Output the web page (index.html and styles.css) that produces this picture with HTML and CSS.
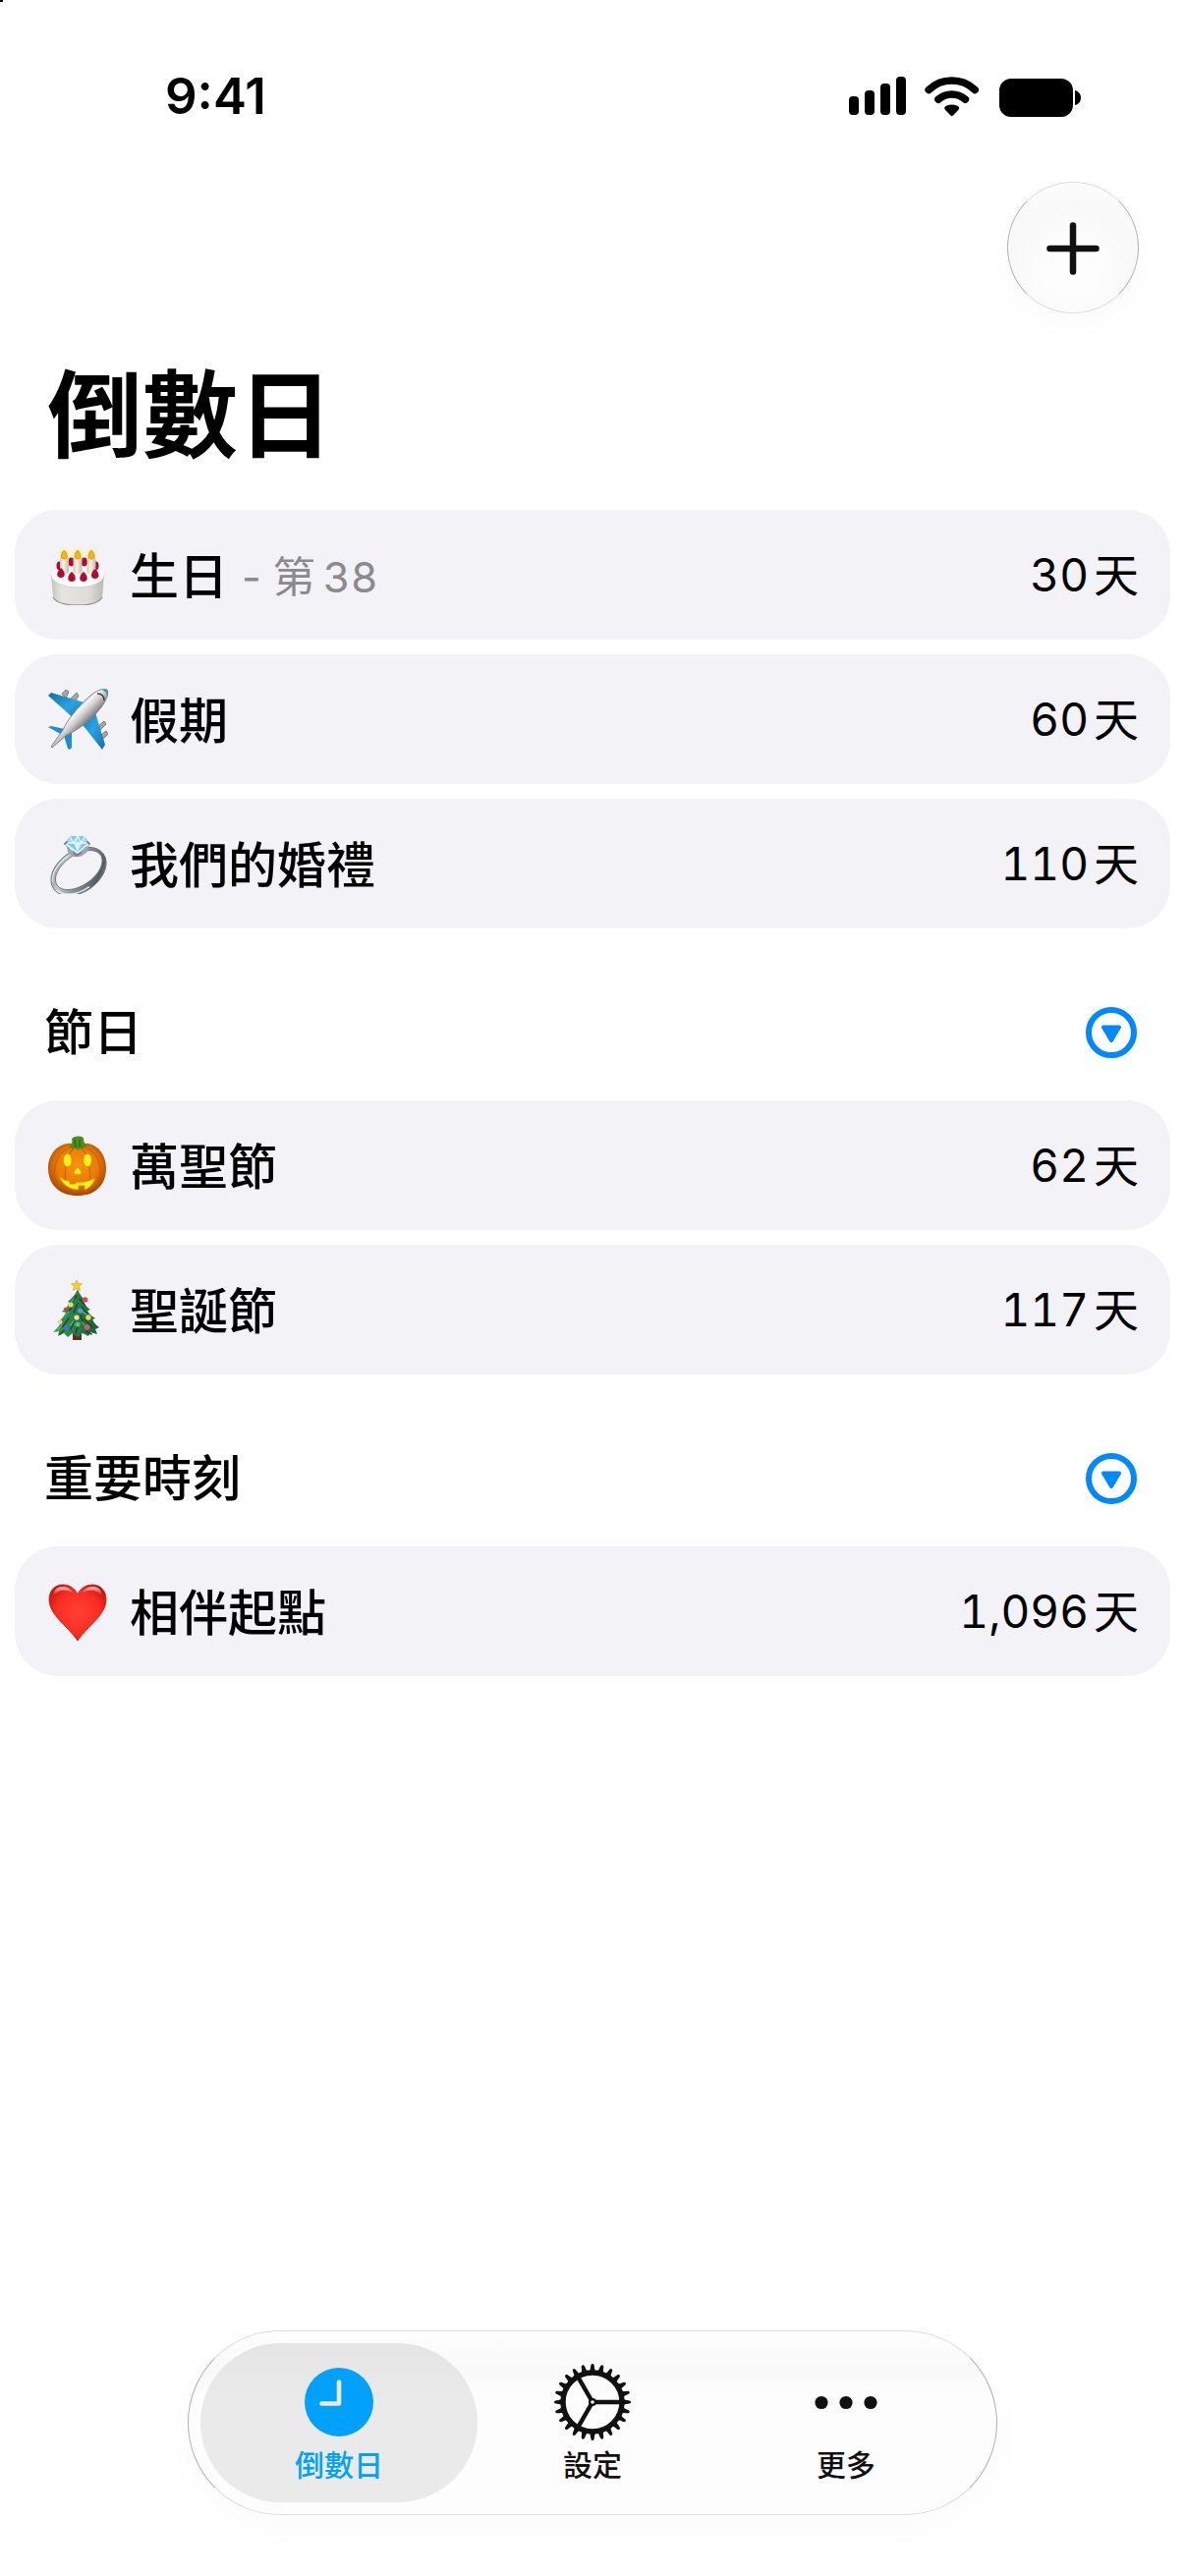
FILE: index.html
```html
<!DOCTYPE html>
<html lang="zh-Hant">
<head>
<meta charset="utf-8">
<meta name="viewport" content="width=device-width, initial-scale=1">
<title>倒數日</title>
<link rel="stylesheet" href="styles.css">
</head>
<body>
<div class="app">
  <div class="status">
    <span class="clock">9:41</span>
    <svg class="status-icons" width="236" height="41" viewBox="0 0 236 41" aria-hidden="true">
      <rect x="0" y="20" width="10" height="19" rx="4"/>
      <rect x="16" y="14" width="10" height="25" rx="4"/>
      <rect x="32" y="7" width="10" height="32" rx="4"/>
      <rect x="48" y="0" width="10" height="39" rx="4"/>
      <g fill="none" stroke="#000" stroke-width="7.6" stroke-linecap="round">
        <path d="M81.2 13.4a34 34 0 0 1 47 0"/>
        <path d="M91 23.2a20.5 20.5 0 0 1 27.400 0"/>
      </g>
      <path d="M98.600 34.500c-2-1.800-2-3.500.400-4.700a13 13 0 0 1 11.400 0c2.400 1.200 2.400 2.900.4 4.700l-4.300 4.600c-1.300 1.400-2.300 1.400-3.600 0z"/>
      <rect x="153" y="2" width="75" height="39" rx="12"/>
      <path d="M230 14c4 1 6 4 6 7.500s-2 6.500-6 7.500z"/>
    </svg>
  </div>

  <header class="top">
    <button class="add" type="button" aria-label="新增">
      <svg width="54" height="54" viewBox="0 0 54 54"><path d="M27 3.500v47M3.500 27h47" stroke="#111" stroke-width="6.500" stroke-linecap="round"/></svg>
    </button>
  </header>
  <h1 class="title">倒數日</h1>

  <main>
    <ul class="list">
      <li class="card">
        <svg class="emoji" viewBox="0 0 62 62" role="img" aria-label="蛋糕">
          <defs>
            <linearGradient id="cakeSide" x1="0" x2="1"><stop offset="0" stop-color="#c4c2be"/><stop offset=".2" stop-color="#e6e4e1"/><stop offset=".7" stop-color="#dfddda"/><stop offset="1" stop-color="#bcb9b4"/></linearGradient>
            <linearGradient id="candle" x1="0" x2="1"><stop offset="0" stop-color="#cfc8b0"/><stop offset=".4" stop-color="#f8f4e3"/><stop offset="1" stop-color="#c4bca2"/></linearGradient>
            <radialGradient id="glow"><stop offset="0" stop-color="#ffe95c"/><stop offset="1" stop-color="#fff3a0" stop-opacity="0"/></radialGradient>
          </defs>
          <path d="M4 31l2 23c1 5 12 9 25 9s24-4 25-9l2-23z" fill="url(#cakeSide)"/>
          <path d="M6 54c3 5 12 8 25 8s22-3 25-8" fill="none" stroke="#9b978f" stroke-width="1.400"/>
          <ellipse cx="31" cy="31" rx="27" ry="13" fill="#fafafa"/>
          <path d="M4 31c0 7 12 13 27 13s27-6 27-13" fill="none" stroke="#d2d0cc" stroke-width="1"/>
          <g fill="#b00a38"><ellipse cx="12.500" cy="22" rx="3" ry="4.400"/><ellipse cx="49.500" cy="22" rx="3" ry="4.400"/><ellipse cx="24.700" cy="18" rx="3.400" ry="4.400"/><ellipse cx="37.700" cy="18" rx="3.400" ry="4.400"/></g>
          <g fill="url(#glow)"><circle cx="17.300" cy="10" r="8"/><circle cx="31" cy="10" r="8"/><circle cx="45" cy="10" r="8"/></g>
          <g fill="url(#candle)"><rect x="13" y="13" width="9" height="17" rx="2.500"/><rect x="26.500" y="13" width="9" height="17" rx="2.500"/><rect x="40.500" y="13" width="9" height="17" rx="2.500"/></g>
          <g fill="#f1b90f" stroke="#c08e10" stroke-width=".7"><path d="M17.300 6c4 4 4 9 0 9s-4-5 0-9zM31 6c4 4 4 9 0 9s-4-5 0-9zM45 6c4 4 4 9 0 9s-4-5 0-9z"/></g>
          <g fill="#b00a38"><path d="M14 24c5 4 5 10 0 10s-5-6 0-10zM25 28c5 4 5 10 0 10s-5-6 0-10zM37 28c5 4 5 10 0 10s-5-6 0-10zM48.700 25c5 4 5 10 0 10s-5-6 0-10z"/></g>
        </svg>
        <span class="name">生日</span>
        <span class="nth"><span>-</span><span>第</span><span class="num">38</span></span>
        <span class="days"><span class="num">30</span><span class="unit">天</span></span>
      </li>
      <li class="card">
        <svg class="emoji" viewBox="0 0 62 62" role="img" aria-label="飛機">
          <defs>
            <linearGradient id="hull" gradientUnits="userSpaceOnUse" x1="23" y1="20" x2="39" y2="36"><stop offset="0" stop-color="#8e8c8a"/><stop offset=".35" stop-color="#f4f4f4"/><stop offset=".6" stop-color="#d2d1d0"/><stop offset="1" stop-color="#7d7b79"/></linearGradient>
            <linearGradient id="wing" x1="0" y1="0" x2="1" y2="1"><stop offset="0" stop-color="#0f6fa3"/><stop offset=".5" stop-color="#2ba3e0"/><stop offset="1" stop-color="#0f6fa3"/></linearGradient>
          </defs>
          <g fill="#a8a6a3" stroke="#6d6b68" stroke-width=".8"><path d="M15 5l4-4 3 2-3 7zM24 10l6-6 2 3-4 7zM52 38l6-5 2 3-6 6zM55 47l5-4 2 3-5 5z"/></g>
          <path d="M1 7l3-3 37 11-12 17z" fill="url(#wing)"/>
          <path d="M48 21l11 36-3 5-23-29z" fill="url(#wing)"/>
          <path d="M1 39l3-1 14 3-1 7z" fill="#1f8fc9"/>
          <path d="M17 48l8-5v17l-2 2-2-1z" fill="#1f8fc9"/>
          <path d="M4 59l12-17c4-9 15-24 28-35 6-5 13-8 17-6 2 5-1 11-6 18C45 32 30 43 20 47L5 60z" fill="url(#hull)" stroke="#7d7b78" stroke-width=".9"/>
          <path d="M56 1q8-2 5 7l-1-4z" fill="#2b9bd3"/>
          <path d="M51 5q7 0 7 7" fill="none" stroke="#444" stroke-width="1.500"/>
        </svg>
        <span class="name">假期</span>
        <span class="days"><span class="num">60</span><span class="unit">天</span></span>
      </li>
      <li class="card">
        <svg class="emoji" viewBox="0 0 62 62" role="img" aria-label="戒指">
          <defs>
            <linearGradient id="band" x1="0" y1="0" x2="1" y2="1"><stop offset="0" stop-color="#767c84"/><stop offset=".3" stop-color="#c3c8ce"/><stop offset=".55" stop-color="#858c95"/><stop offset=".8" stop-color="#555c66"/><stop offset="1" stop-color="#a4aab2"/></linearGradient>
          </defs>
          <g transform="rotate(-35 32 39)">
            <path fill-rule="evenodd" d="M1 39a31 21 0 1 1 62 0a31 21 0 1 1-62 0zM6 38a27 15.500 0 1 0 54 0a27 15.500 0 1 0-54 0z" fill="url(#band)" stroke="#666d76" stroke-width=".8"/>
            <path d="M3 42c3 10 14 16 29 16" fill="none" stroke="#e8eaee" stroke-width="1.600"/>
            <path d="M4 33c4-8 15-13 28-13" fill="none" stroke="#e8eaee" stroke-width="1.300"/>
          </g>
          <path d="M19 11l9 10h5l10-10-3 9-6 4h-8l-5-5z" fill="#a1a7ae"/>
          <path d="M18 10l5-7h15l5 7-11 10h-3z" fill="#9bd8fb"/>
          <path d="M18 10h25l-12 10zM23 3l4 7 4-7 4 7 3-7" fill="#62b6ef" fill-opacity=".5" stroke="#e9f8ff" stroke-width="1.400"/>
          <path d="M27 10l4 9 4-9z" fill="#d9f3ff"/>
          <path d="M18 11l2-2M43 11l-2-2M27 20l3 3 4-3" stroke="#7a828b" stroke-width="2" stroke-linecap="round" fill="none"/>
        </svg>
        <span class="name">我們的婚禮</span>
        <span class="days"><span class="num">110</span><span class="unit">天</span></span>
      </li>
    </ul>

    <section>
      <div class="section-head">
        <h2>節日</h2>
        <button class="toggle" type="button" aria-label="收合節日">
          <svg width="52" height="52" viewBox="0 0 52 52"><circle cx="26" cy="26" r="23" fill="none" stroke="#08f" stroke-width="6"/><path d="M18 20.500h16l-8 13.500z" fill="#08f" stroke="#08f" stroke-width="4" stroke-linejoin="round"/></svg>
        </button>
      </div>
      <ul class="list">
        <li class="card">
          <svg class="emoji" viewBox="0 0 62 62" role="img" aria-label="南瓜燈">
            <defs>
              <radialGradient id="pumpkin" cx=".5" cy=".42" r=".6"><stop offset="0" stop-color="#f8930e"/><stop offset=".6" stop-color="#ea7a08"/><stop offset="1" stop-color="#a03f06"/></radialGradient>
            </defs>
            <path d="M31 10c16-5 29 7 29 24 0 18-12 28-29 28S1 52 1 34C1 17 15 5 31 10z" fill="url(#pumpkin)"/>
            <g fill="none" stroke="#bf5a05" stroke-width="1.300" opacity=".7"><path d="M28 13C17 22 15 48 24 61M34 13c11 9 13 35 4 48M24 13C7 18 3 42 13 55M38 13c17 5 21 29 11 42"/></g>
            <path d="M21 12c4-1 5-4 4-8 4-3 8-3 12-1 0 4 1 7 5 9-3 0-5 0-6 3-2-2-3-1-5 1-2-3-3-3-5-1-1-2-3-3-5-3z" fill="#4d8c1d"/>
            <path d="M28 5l1 8M33 5v8" stroke="#2d6511" stroke-width="1.300"/>
            <g fill="#f8ef17" stroke="#d88a08" stroke-width=".8"><ellipse cx="20.700" cy="26" rx="4.400" ry="6.800"/><ellipse cx="41" cy="26" rx="4.400" ry="6.800"/><path d="M31 33c2 2 4 4 4 6-2 2-6 2-8 0 0-2 2-4 4-6z"/><path d="M12 42c4 4 8 5 11 5v3h6v-2c8 1 14-1 20-4-2 7-7 11-11 12v-4h-6v4c-10 0-17-6-20-14z"/></g>
          </svg>
          <span class="name">萬聖節</span>
          <span class="days"><span class="num">62</span><span class="unit">天</span></span>
        </li>
        <li class="card">
          <svg class="emoji" viewBox="0 0 62 62" role="img" aria-label="聖誕樹">
            <defs><linearGradient id="pine" x1="0" x2="1"><stop offset="0" stop-color="#3f9a57"/><stop offset="1" stop-color="#1d5c37"/></linearGradient></defs>
            <rect x="26" y="53" width="9" height="10" rx="1" fill="#5b3219"/>
            <path d="M31 10c2 6 5 9 9 12l-3 1c2 4 4 6 7 8l-3 1c2 4 5 6 8 8l-3 1c2 4 4 6 7 8l-4 2 2 5-7-2-2 4-6-3-5 4-5-4-5 4-4-4-6 3 1-5-6 1c4-4 6-6 8-10l-3-1c4-2 6-5 8-9l-4-1c4-3 6-6 8-9l-2-1c4-4 8-7 10-13z" fill="url(#pine)"/>
            <path d="M30 17l-6 8M33 20l5 6M25 29l-6 7M31 25l-4 9M35 29l6 7M22 40l-7 9M29 38l-5 13M34 37l4 11M38 41l8 8M31 48l-2 7M17 52l-4 4M40 53l5 3" stroke="#174d2c" stroke-width="1.500" stroke-linecap="round"/>
            <path d="M27 20l-3 4M22 33l-4 4M36 33l4 3M27 42l-3 5M36 44l3 5M15 47l-4 4" stroke="#67b878" stroke-width="1.200" stroke-linecap="round"/>
            <path d="M30 1l1.500 3.500 4 .3-3 2.700 1 4-3.500-2.200-3.500 2.200 1-4-3-2.700 4-.3z" fill="#f8cf2c" stroke="#dba31a" stroke-width=".7"/>
            <g><circle cx="38.700" cy="21" r="2.700" fill="#e2425a"/><circle cx="24" cy="26" r="2.600" fill="#f0d956"/><circle cx="18.700" cy="30.700" r="2" fill="#d73a55"/><circle cx="33.700" cy="32" r="2.600" fill="#5a9be0"/><circle cx="30" cy="39" r="2.600" fill="#f3dfa0"/><circle cx="42" cy="39" r="2.700" fill="#efd94e"/><circle cx="13" cy="43.700" r="2.400" fill="#f0cf9d"/><circle cx="19.700" cy="49.700" r="2.500" fill="#3c78c8"/><circle cx="31" cy="46" r="2.600" fill="#57bf78"/><circle cx="40.700" cy="49" r="2.800" fill="#e25674"/></g>
          </svg>
          <span class="name">聖誕節</span>
          <span class="days"><span class="num">117</span><span class="unit">天</span></span>
        </li>
      </ul>
    </section>

    <section>
      <div class="section-head">
        <h2>重要時刻</h2>
        <button class="toggle" type="button" aria-label="收合重要時刻">
          <svg width="52" height="52" viewBox="0 0 52 52"><circle cx="26" cy="26" r="23" fill="none" stroke="#08f" stroke-width="6"/><path d="M18 20.500h16l-8 13.500z" fill="#08f" stroke="#08f" stroke-width="4" stroke-linejoin="round"/></svg>
        </button>
      </div>
      <ul class="list">
        <li class="card">
          <svg class="emoji" viewBox="0 0 62 62" role="img" aria-label="愛心">
            <defs>
              <radialGradient id="heart" cx=".5" cy=".5" r=".6"><stop offset="0" stop-color="#ff4033"/><stop offset=".65" stop-color="#fb2c22"/><stop offset="1" stop-color="#c4130f"/></radialGradient>
              <linearGradient id="shine" x1="0" y1="0" x2="0" y2="1"><stop offset="0" stop-color="#fff" stop-opacity=".7"/><stop offset="1" stop-color="#fff" stop-opacity="0"/></linearGradient>
            </defs>
            <path d="M31 14C28 7 22 4 16 4 8 4 2 10 2 19c0 16 19 27 29 42 10-15 29-26 29-42 0-9-6-15-14-15-6 0-12 3-15 10z" fill="url(#heart)" stroke="#c41a14" stroke-width=".8"/>
            <path d="M6 15C7 8 11 6 16 6s9 3 11 7C20 8 12 9 6 15zM56 15C55 8 51 6 46 6s-9 3-11 7c7-5 15-4 21 2z" fill="url(#shine)"/>
          </svg>
          <span class="name">相伴起點</span>
          <span class="days"><span class="num">1,096</span><span class="unit">天</span></span>
        </li>
      </ul>
    </section>
  </main>

  <nav class="tabs">
    <button class="tab active" type="button" aria-current="page">
      <svg width="78" height="78" viewBox="0 0 78 78" aria-hidden="true"><circle cx="39" cy="39" r="35" fill="currentColor"/><path d="M39 18.500v22H21.500" fill="none" stroke="#e9e9e9" stroke-width="4.600" stroke-linecap="round" stroke-linejoin="round"/></svg>
      <span>倒數日</span>
    </button>
    <button class="tab" type="button">
      <svg width="78" height="78" viewBox="0 0 78 78" aria-hidden="true">
        <defs>
          <path id="tooth" d="M36 8c1-3 1-5 1.400-6.500.4-2 2.800-2 3.200 0C41 3 41 5 42 8z"/>
          <g id="teeth"><use href="#tooth"/><use href="#tooth" transform="rotate(15 39 39)"/><use href="#tooth" transform="rotate(30 39 39)"/><use href="#tooth" transform="rotate(45 39 39)"/><use href="#tooth" transform="rotate(60 39 39)"/><use href="#tooth" transform="rotate(75 39 39)"/></g>
        </defs>
        <g fill="currentColor"><use href="#teeth"/><use href="#teeth" transform="rotate(90 39 39)"/><use href="#teeth" transform="rotate(180 39 39)"/><use href="#teeth" transform="rotate(270 39 39)"/></g>
        <circle cx="39" cy="39" r="30" fill="none" stroke="currentColor" stroke-width="5.400"/>
        <path d="M39 39h29M39 39L24.500 13.900M39 39L24.500 64.100" stroke="currentColor" stroke-width="4.400"/>
        <circle cx="39" cy="39" r="4" fill="currentColor"/><circle cx="39" cy="39" r="1.800" fill="#fcfcfc"/>
      </svg>
      <span>設定</span>
    </button>
    <button class="tab" type="button">
      <svg width="78" height="78" viewBox="0 0 78 78" fill="currentColor" aria-hidden="true"><circle cx="14" cy="39.500" r="6.600"/><circle cx="39" cy="39.500" r="6.600"/><circle cx="64" cy="39.500" r="6.600"/></svg>
      <span>更多</span>
    </button>
  </nav>
</div>
</body>
</html>
```

FILE: styles.css
```css
* {
  box-sizing: border-box;
}

body {
  margin: 0;
  background: #fff;
  color: #000;
  font-family: Inter, "Noto Sans CJK TC", sans-serif;
  font-size: 50px;
}

button {
  padding: 0;
  border: 0;
  background: none;
  color: inherit;
  font: inherit;
}

svg {
  display: block;
  flex: none;
}

h1,
h2,
ul {
  margin: 0;
  padding: 0;
}

.app {
  display: flex;
  flex-direction: column;
  min-height: 100vh;
  background: linear-gradient(#000, #000) 0 0 / 3px 2px no-repeat;
}

/* Status bar */
.status {
  display: flex;
  align-items: center;
  justify-content: space-between;
  padding: 70px 106px 0 168px;
}

.clock {
  font-size: 51px;
  font-weight: 600;
  line-height: 56px;
}

/* Header */
.top {
  display: flex;
  justify-content: flex-end;
  padding: 59px 47px 0;
}

.add {
  display: grid;
  place-items: center;
  width: 134px;
  height: 134px;
  padding-top: 2px;
  border: 1px solid;
  border-color: #dedede #b4b4b4;
  border-radius: 50%;
  background: radial-gradient(circle at 50% 68%, #fdfdfd 25%, #f8f8f8 60%, #fdfdfd 85%);
  box-shadow: 0 14px 30px rgba(0, 0, 0, 0.02);
}

.title {
  padding: 44px 48px 36px;
  font-size: 97px;
  font-weight: 700;
  line-height: 120px;
}

/* Lists */
.list {
  display: flex;
  flex-direction: column;
  gap: 15px;
  padding: 0 15px;
  list-style: none;
}

.card {
  display: flex;
  align-items: center;
  padding: 31px 32px 31px 33px;
  border-radius: 44px;
  background: #f2f2f7;
  line-height: 70px;
}

.emoji {
  width: 62px;
  height: 62px;
  margin-right: 22px;
}

.name {
  padding-top: 4px;
  font-weight: 500;
  line-height: 56px;
}

.num {
  font-variant-numeric: tabular-nums;
}

.nth {
  display: flex;
  gap: 12px;
  margin-left: 14px;
  padding-top: 4px;
  color: #8a8a8e;
  font-size: 43px;
  line-height: 56px;
}

.nth .num {
  margin-left: -4px;
}

.days {
  display: flex;
  gap: 5px;
  margin-left: auto;
  font-size: 46px;
}

.section-head {
  display: flex;
  align-items: center;
  justify-content: space-between;
  padding: 76px 49px 39px 45px;
}

.section-head h2 {
  font-size: 50px;
  font-weight: 500;
  line-height: 60px;
}

/* Tab bar */
.tabs {
  display: flex;
  align-self: center;
  margin: auto 0 62px;
  padding: 12px;
  border: 1px solid;
  border-color: #dedede #b0b0b0;
  border-radius: 94px;
  background: linear-gradient(#fefefe, #f9f9f9 22%, #fdfdfd 36%, #fdfdfd);
  box-shadow: 0 14px 40px rgba(0, 0, 0, 0.02);
}

.tab {
  display: flex;
  flex-direction: column;
  align-items: center;
  gap: 7px;
  width: 282px;
  padding: 21px 0 20px;
  border-radius: 81px;
  color: #111;
  font-size: 30px;
  font-weight: 500;
  line-height: 36px;
}

.tab + .tab {
  margin-left: -24px;
}

.active {
  background: linear-gradient(#e5e5e5, #eaeaea 40%);
  color: #00a1fb;
}
```
